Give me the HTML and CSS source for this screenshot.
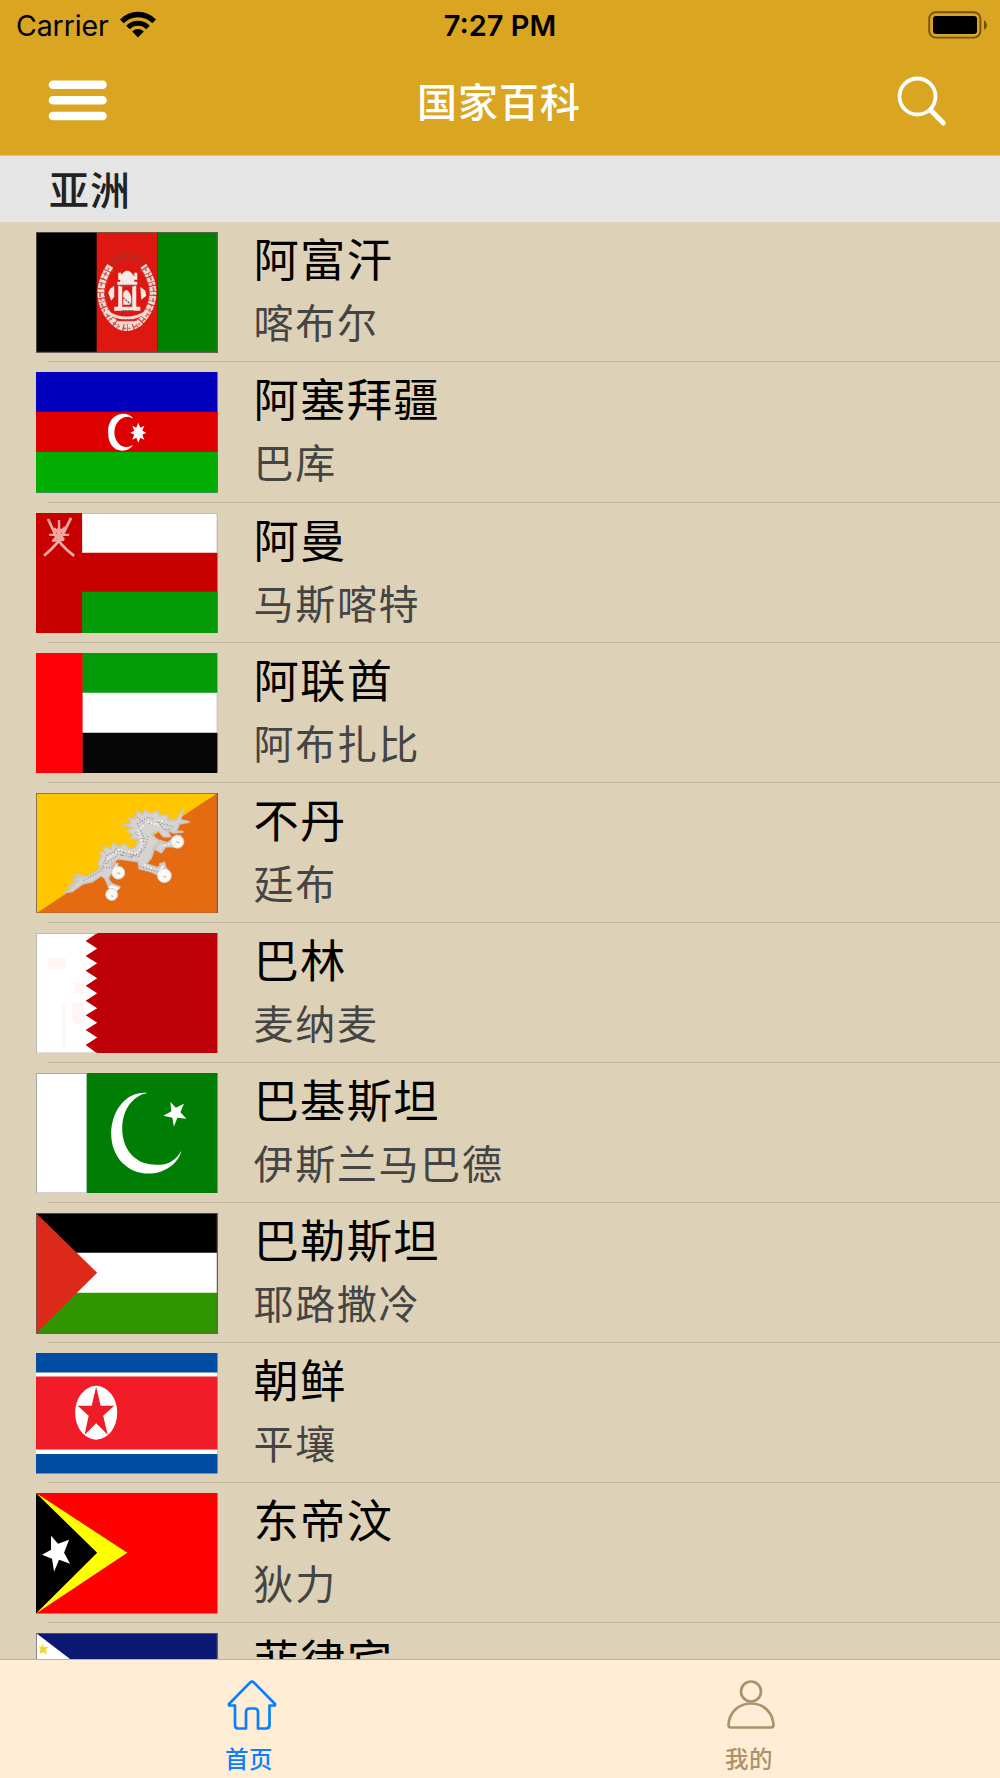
FILE: index.html
```html
<!DOCTYPE html>
<html lang="zh-CN">
<head>
    <meta charset="UTF-8">
    <meta name="viewport" content="width=device-width, initial-scale=1.0">
    <title>国家百科</title>
    <link rel="stylesheet" href="styles.css">
</head>
<body>
    <!-- 顶部导航 -->
    <header class="header">
        <div class="status-bar">
            <div class="carrier">
                <span>Carrier</span>
                <svg class="wifi" width="38" height="28" viewBox="0 0 38 28">
                    <path d="M1 9.5A25 25 0 0 1 37 9.5L33.3 13.2A20 20 0 0 0 4.7 13.2Z"/>
                    <path d="M7.2 15.7A16.5 16.5 0 0 1 30.8 15.7L27.2 19.2A11.6 11.6 0 0 0 10.8 19.2Z"/>
                    <path d="M13.2 21.6A8 8 0 0 1 24.8 21.6L19 27.4Z"/>
                </svg>
            </div>
            <div class="time">7:27 PM</div>
            <div class="battery">
                <svg width="60" height="28" viewBox="0 0 60 28">
                    <rect x="1.2" y="1.2" width="51.2" height="25.4" rx="6.5" fill="none" stroke="#000" stroke-opacity=".48" stroke-width="1.9"/>
                    <rect x="5" y="5" width="44" height="18" rx="3"/>
                    <path d="M56 9Q59 11 59 14T56 19Z" opacity=".5"/>
                </svg>
            </div>
        </div>
        <nav class="nav-bar">
            <button class="nav-btn" aria-label="菜单">
                <svg width="60" height="42" viewBox="0 0 60 42" stroke="#fff" stroke-width="8.6" stroke-linecap="round">
                    <path d="M5 5.7H54.5M5 21.3H54.5M5 37H54.5"/>
                </svg>
            </button>
            <h1 class="title">国家百科</h1>
            <button class="nav-btn" aria-label="搜索">
                <svg width="50" height="52" viewBox="0 0 50 52" fill="none" stroke="#fff" stroke-linecap="round">
                    <circle cx="20.5" cy="21.5" r="18" stroke-width="3.8"/>
                    <path d="M33.5 35L46.3 48" stroke-width="5"/>
                </svg>
            </button>
        </nav>
    </header>

    <!-- 国家列表 -->
    <main class="list">
        <h2 class="section">亚洲</h2>

        <div class="row">
            <svg class="flag" viewBox="0 0 181 121" preserveAspectRatio="none">
                <rect width="181" height="121"/>
                <path fill="#de1810" d="M60.5 0H121V121H60.5Z"/>
                <path fill="#008200" d="M121 0H181V121H121Z"/>
                <g fill="none" stroke="#f3d8d3">
                    <path d="M74 34Q58 59 70 80Q79 96 90 96Q103 96 112 79Q123 57 107 34" stroke-width="7" stroke-dasharray="5 1 3 .6"/>
                    <path d="M73 36Q57 59 69 80Q79 97 90 97Q104 97 113 79Q124 57 108 36" stroke="#b8685d" stroke-width="1.6" stroke-dasharray="2 3 4 2"/>
                    <path d="M77 38Q62 59 73 78Q80 92 90 92Q101 92 109 77Q119 57 104 38" stroke="#c2483c" stroke-width="1.2" stroke-dasharray="3 2"/>
                    <path d="M75 31Q90 17 106 31" stroke="#a93027" stroke-width="7" stroke-dasharray="2 2"/>
                    <path d="M69 79Q90 94 112 79M81 91H100" stroke-width="3"/>
                </g>
                <path fill="#f8e9e5" d="M81 53V50H84V45Q91 33 98 45V50H101V53ZM82 54H86V75H82ZM96 54H100V75H96ZM78 75H104V79H78ZM87 61Q91 54 95 65V73H87ZM74 57L78 54V65L75 69L72 61ZM104 55L109 59L110 64L105 68ZM82 41H85V48H82ZM98 41H101V48H98Z"/>
                <path d="M84 54H98M87 66L95 73M86 79H98M84 88H99" stroke="#85544c" stroke-width="1.5" stroke-dasharray="2 1"/>
                <rect class="edge" width="181" height="121"/>
            </svg>
            <div class="info">
                <div class="name">阿富汗</div>
                <div class="capital">喀布尔</div>
            </div>
        </div>

        <div class="row">
            <svg class="flag" viewBox="0 0 181 121" preserveAspectRatio="none">
                <rect width="181" height="121" fill="#0000bd"/>
                <path fill="#de0000" d="M0 40H181V80H0Z"/>
                <path fill="#00ad00" d="M0 80H181V121H0Z"/>
                <path fill="#fff" d="M97 47Q94 42 86 42C76 43 71 52 72 62C72 72 78 79 86 79Q93 79 97 73Q91 77 85 74C76 68 76 53 85 47Q91 43 97 47Z"/>
                <path fill="#fff" d="M102 51L104 56L108 54L106 59L110 61L106 63L108 68L104 66L102 71L100 66L96 68L98 63L94 61L98 59L96 54L100 56Z"/>
            </svg>
            <div class="info">
                <div class="name">阿塞拜疆</div>
                <div class="capital">巴库</div>
            </div>
        </div>

        <div class="row">
            <svg class="flag" viewBox="0 0 181 121" preserveAspectRatio="none">
                <rect width="181" height="121" fill="#c90000"/>
                <path fill="#fff" d="M46 0H181V40H46Z"/>
                <path fill="#059a08" d="M46 79H181V121H46Z"/>
                <g fill="none" stroke="#efa9a2" stroke-width="2.8">
                    <path d="M12 6L18 19Q22 31 38 43M35 5L28 19Q24 29 8 43"/>
                    <path d="M23 7V29M13 22H33M18 15L28 27M29 14L17 28M16 28L28 27" stroke-width="2.4"/>
                    <circle cx="23" cy="20" r="4" stroke-width="1.5"/>
                </g>
                <path d="M46 .5H181M180.6 0V40" stroke="#bdbdbd"/>
            </svg>
            <div class="info">
                <div class="name">阿曼</div>
                <div class="capital">马斯喀特</div>
            </div>
        </div>

        <div class="row">
            <svg class="flag" viewBox="0 0 181 121" preserveAspectRatio="none">
                <rect width="181" height="121" fill="#fff"/>
                <path fill="#059a08" d="M46 0H181V40H46Z"/>
                <path fill="#060606" d="M46 80H181V121H46Z"/>
                <path fill="#ff0008" d="M0 0H46.5V121H0Z"/>
                <path d="M180.6 40V80" stroke="#bdbdbd"/>
            </svg>
            <div class="info">
                <div class="name">阿联酋</div>
                <div class="capital">阿布扎比</div>
            </div>
        </div>

        <div class="row">
            <svg class="flag" viewBox="0 0 181 121" preserveAspectRatio="none">
                <rect width="181" height="121" fill="#ffc600"/>
                <path fill="#e56b13" d="M181 0V121H0Z"/>
                <!-- 龙 -->
                <g fill="#d6d3d0" stroke="#cbc7c2" stroke-width="1.6">
                    <path d="M29 100L39 92L31 95L42 88L35 87L45 85L38 82L51 84L64 76L62 70L66 63L63 59L69 60L67 54L75 56L77 50L83 55L89 51L92 56L99 55L103 46L94 46L97 42L91 38L97 35L87 32L95 30L92 25L99 26L101 18L106 22L109 17L114 21L121 18L123 23L131 22L132 28L140 27L147 16L144 27L153 29L143 31L140 38L147 39L137 40L131 37L134 44L127 44L122 38L115 41L121 47L131 50L138 45L139 54L129 54L125 60L118 56L115 65L110 71L121 75L128 71L131 79L123 83L115 79L103 76L102 69L89 67L82 66L75 71L76 78L72 86L77 93L80 94L74 98L69 86L65 83L56 89L47 91L36 99Z"/>
                    <path fill="none" stroke-width="2.5" d="M73 74L80 70M72 90L84 95M116 57L124 49L132 51M123 72L129 70"/>
                </g>
                <path d="M47 88L65 78L71 62L84 58L103 64L108 45L101 31L112 24L127 31L137 34M70 71L82 62L96 64L108 57L112 42M104 74L121 79M122 29L128 37L135 36M99 40L106 46M80 55L76 62M89 57L85 64M97 59L94 67M67 75L76 75M101 24L109 31L116 30" fill="none" stroke="#98979a" stroke-width="1.3" stroke-dasharray="1.2 1.6"/>
                <path d="M71 66L83 57L101 61L106 52L102 37L112 29L124 33M118 27L128 29M128 53L138 49M108 72L116 76" fill="none" stroke="#fff" stroke-width="1.5" stroke-dasharray="1.6 1.8"/>
                <g fill="#faf8f5" stroke="#d2cbc2" stroke-width=".8">
                    <path d="M72 95L75 92L84 95L80 99M76 75L82 70L81 75L85 75M122 77L128 71L127 77L131 76M136 45L140 42L143 44L145 42"/>
                    <circle cx="82" cy="80" r="6.500"/>
                    <circle cx="75.500" cy="102" r="6"/>
                    <circle cx="128" cy="83" r="7"/>
                    <circle cx="141" cy="49" r="6.500"/>
                </g>
                <path d="M81 80L84 81M75 103L77 104M127 84L130 84M140 49L143 50" fill="none" stroke="#b5b0ab"/>
                <rect class="edge" width="181" height="121"/>
            </svg>
            <div class="info">
                <div class="name">不丹</div>
                <div class="capital">廷布</div>
            </div>
        </div>

        <div class="row">
            <svg class="flag" viewBox="0 0 181 121" preserveAspectRatio="none">
                <rect width="181" height="121" fill="#fff"/>
                <path fill="#be0008" d="M181 0H61L49.500 8L61 15.500L49.500 23L61 30.500L49.500 38L61 45.500L49.500 53L61 60.500L49.500 68L61 75.500L49.500 82.500L61 90L49.500 97.500L61 105L49.500 112.500L61 121H181Z"/>
                <path fill="#fff6f4" d="M12 25H30V36H12ZM26 73H30V115H26ZM36 70H48V92H40L36 86ZM38 50H48V61H38Z"/>
                <path d="M61 .5H.5V120.500H61" fill="none" stroke="#bfb9b3"/>
            </svg>
            <div class="info">
                <div class="name">巴林</div>
                <div class="capital">麦纳麦</div>
            </div>
        </div>

        <div class="row">
            <svg class="flag" viewBox="0 0 181 121" preserveAspectRatio="none">
                <rect width="181" height="121" fill="#007d05"/>
                <path fill="#fff" d="M0 0H50.500V121H0Z"/>
                <path fill="#fff" d="M111 20C89 18 75 39 75 61C75 85 92 101 112 101C128 101 142 91 145 78C138 90 129 93 117 92C98 91 86 76 86 56C86 37 96 23 111 20Z"/>
                <path fill="#fff" d="M134 29L139.500 35L147.500 31L144 39.500L150 46L141 45L137.500 54L136 45L127 43L135 38.500Z"/>
                <path d="M51 .5H.5V120.500H51" fill="none" stroke="#a9a9a3"/>
            </svg>
            <div class="info">
                <div class="name">巴基斯坦</div>
                <div class="capital">伊斯兰马巴德</div>
            </div>
        </div>

        <div class="row">
            <svg class="flag" viewBox="0 0 181 121" preserveAspectRatio="none">
                <rect width="181" height="121" fill="#fff"/>
                <path d="M0 0H181V40H0Z"/>
                <path fill="#309600" d="M0 80H181V121H0Z"/>
                <path fill="#dd291a" d="M0 0L61 60L0 121Z"/>
                <rect class="edge" width="181" height="121"/>
            </svg>
            <div class="info">
                <div class="name">巴勒斯坦</div>
                <div class="capital">耶路撒冷</div>
            </div>
        </div>

        <div class="row">
            <svg class="flag" viewBox="0 0 181 121" preserveAspectRatio="none">
                <rect width="181" height="121" fill="#004da3"/>
                <path fill="#fff" d="M0 19.500H181V101.500H0Z"/>
                <path fill="#f01d28" d="M0 23.500H181V97H0Z"/>
                <ellipse cx="60" cy="60" rx="21" ry="27" fill="#fff"/>
                <path fill="#ed1c27" d="M60 34L64.500 53H78L67 63L71.500 82L60 70.500L48.500 82L52.500 63L41.500 53H55.500Z"/>
            </svg>
            <div class="info">
                <div class="name">朝鲜</div>
                <div class="capital">平壤</div>
            </div>
        </div>

        <div class="row">
            <svg class="flag" viewBox="0 0 181 121" preserveAspectRatio="none">
                <rect width="181" height="121" fill="#f00"/>
                <path fill="#ff0" d="M0 0L91 60L0 121Z"/>
                <path d="M0 0L61 60L0 121Z"/>
                <path fill="#fff" d="M15 43L22 51L33 47L28 60L34 71L23 67L18 79L16 66L6 62L15 57Z"/>
            </svg>
            <div class="info">
                <div class="name">东帝汶</div>
                <div class="capital">狄力</div>
            </div>
        </div>

        <div class="row">
            <svg class="flag" viewBox="0 0 181 121" preserveAspectRatio="none">
                <rect width="181" height="60" fill="#0b1975"/>
                <rect y="60" width="181" height="61" fill="#ce1126"/>
                <path fill="#fff" d="M0 0L78 60L0 121Z"/>
                <path fill="#f5d51e" d="M6 10L8 14L12 14L9.500 17L11 22L7 19L3.500 21L4.500 16L2.500 13L6 14Z"/>
                <rect class="edge" width="181" height="121"/>
            </svg>
            <div class="info">
                <div class="name">菲律宾</div>
            </div>
        </div>
    </main>

    <!-- 底部标签栏 -->
    <footer class="tab-bar">
        <div class="tab active">
            <svg width="52" height="52" viewBox="0 0 52 52" fill="none" stroke="currentColor" stroke-width="2.7" stroke-linejoin="round">
                <path d="M24 3.600Q26 1.500 28 3.600L49 25V26.500H43.500V46Q43.500 49.500 40 49.500H32V33Q32 29.500 28.500 29.500H23.500Q20 29.500 20 33V49.500H12Q9 49.500 9 46V26.500H3V25Z"/>
            </svg>
            <span>首页</span>
        </div>
        <div class="tab">
            <svg width="52" height="52" viewBox="0 0 52 52" fill="none" stroke="currentColor" stroke-width="2.700">
                <circle cx="26" cy="12.500" r="10"/>
                <path d="M26 24.500C39 24.500 48 34 48.500 46Q48.500 48.500 46 48.500H6Q3.500 48.500 3.500 46C4 34 13 24.500 26 24.500Z"/>
            </svg>
            <span>我的</span>
        </div>
    </footer>
</body>
</html>
```

FILE: styles.css
```css
* {
    box-sizing: border-box;
}

body {
    margin: 0;
    height: 1778px;
    display: flex;
    flex-direction: column;
    overflow: hidden;
    background: #ddd1b7;
    font-family: Inter, "Noto Sans CJK SC", sans-serif;
}

/* 顶部导航 */
.header {
    flex: none;
    height: 155px;
    background: #daa520;
}

.status-bar {
    height: 50px;
    padding: 0 12px 0 16px;
    display: grid;
    grid-template-columns: 1fr auto 1fr;
    align-items: center;
    font-size: 28.5px;
    line-height: 50px;
}

.carrier {
    display: flex;
    align-items: center;
    gap: 10px;
    padding-top: 1px;
    letter-spacing: -0.1px;
}

.wifi {
    margin-top: -4px;
}

.time {
    margin-right: 4px;
    padding-top: 1px;
    font-size: 29px;
    font-weight: 600;
}

.battery {
    display: flex;
    justify-content: flex-end;
    padding-bottom: 1px;
}

.nav-bar {
    height: 105px;
    padding: 0 53px 5px 48px;
    display: grid;
    grid-template-columns: 1fr auto 1fr;
    align-items: center;
}

.nav-btn {
    display: flex;
    padding: 0;
    border: none;
    background: none;
}

.nav-btn:last-child {
    justify-self: end;
    padding-top: 2px;
}

.title {
    margin: 0 -3px 0 0;
    color: #fff;
    font-family: "Noto Sans CJK SC", sans-serif;
    font-size: 40px;
    font-weight: 500;
    letter-spacing: 1px;
    line-height: 58px;
}

/* 国家列表 */
.list {
    flex: 1;
    min-height: 0;
    overflow: hidden;
}

.section {
    margin: 0;
    height: 67.4px;
    padding-left: 49px;
    border-top: 1px solid #ccc8c0;
    background: #e5e5e5;
    color: #222;
    font-family: "Noto Sans CJK SC", sans-serif;
    font-size: 40px;
    font-weight: 500;
    letter-spacing: 1px;
    line-height: 64px;
}

.row {
    height: 140.1px;
    padding: 10px 0 0 36px;
    display: flex;
    gap: 36px;
    background: linear-gradient(#bcb19c, #bcb19c) 48px 100% / 100% 1px no-repeat;
}

.flag {
    flex: none;
    width: 181.5px;
    height: 120.5px;
}

.edge {
    fill: none;
    stroke: #655f55;
    stroke-width: 1.5;
}

.info {
    font-family: "Noto Sans CJK SC", sans-serif;
}

.name {
    height: 60px;
    margin-top: -5px;
    color: #000;
    font-size: 45.3px;
    letter-spacing: 1.3px;
    line-height: 60px;
}

.capital {
    height: 60px;
    margin-top: 4px;
    color: #444;
    font-size: 40px;
    letter-spacing: 1.7px;
    line-height: 60px;
}

/* 底部标签栏 */
.tab-bar {
    flex: none;
    height: 119px;
    display: flex;
    border-top: 1px solid #bfb298;
    background: #ffeed5;
    font-family: "Noto Sans CJK SC", sans-serif;
}

.tab {
    flex: 1;
    display: flex;
    flex-direction: column;
    align-items: center;
    padding-top: 19px;
    color: #ab926a;
    font-size: 23.5px;
    font-weight: 500;
    line-height: 34px;
}

.tab svg {
    margin-left: 2px;
}

.tab span {
    margin: 10px 2px 0 0;
    letter-spacing: 0.5px;
}

.active {
    color: #0a7fff;
}

.active svg {
    margin-left: 4px;
}
```
